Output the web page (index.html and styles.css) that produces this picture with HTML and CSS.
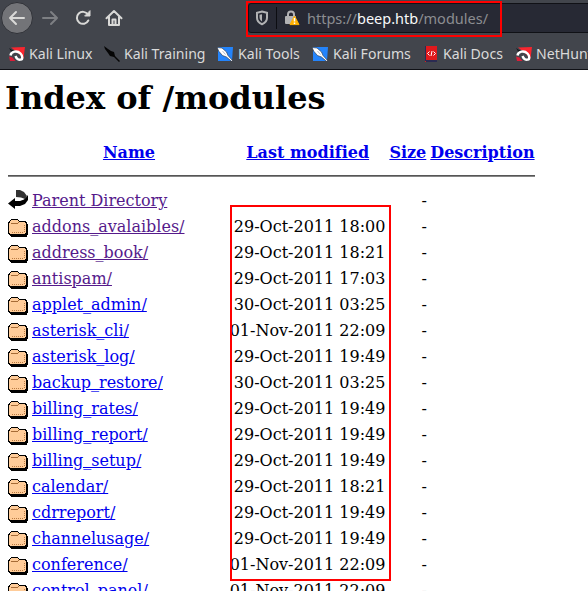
FILE: index.html
```html
<!DOCTYPE html>
<html lang="en">
<head>
<meta charset="utf-8">
<title>Index of /modules</title>
<link rel="stylesheet" href="styles.css">
</head>
<body>
<svg class="defs" width="0" height="0" aria-hidden="true">
  <symbol id="folder" viewBox="0 0 20 18">
    <path d="M3 0h7v1h1v1h7v1h1v2h1v11h-1v2H3v-1H2v-1H1v-1H0V3h1V2h1V1h1z" fill="#000"/>
    <path d="M3 1h7v1h1v1h6v1h1v10h-1v1H2v-1H1V4h1V2h1z" fill="#ffcc99"/>
    <path d="M3 4.500h7M10 3.500h1" stroke="#a66b36"/>
    <path d="M4 13.500h12M16.500 6v8" stroke="#b87a42" stroke-dasharray="1 1"/>
  </symbol>
  <symbol id="dragon" viewBox="0 0 16 16">
    <path d="M2 1.500l14-.5-1.500 11.500L9 7z" fill="#f8262f"/>
    <path d="M0 2l3 2 5 1-5 2z" fill="#15171c"/>
    <path d="M1.500 9.500C2 5.500 8 4 11.500 7.500c2.500 2.500 2 6 .5 6-2 .8-4.500-.5-5.500-3.500" fill="none" stroke="#fff" stroke-width="2.400"/>
    <path d="M0 10.500l3.500 1 3 3.500H1z" fill="#d91f38"/>
  </symbol>
  <symbol id="tool" viewBox="0 0 16 16">
    <path d="M1 1h15l-1 14H1z" fill="#2484fb"/>
    <path d="M0 1.500l5 .5 4.500 4 1.500 3.500 4.500 5-1 .8-5-4.300-4-1.500L2 5.500z" fill="#fff" stroke="#27303f" stroke-width=".6"/>
    <path d="M5.500 5l3 3.500" stroke="#b6bbc6"/>
  </symbol>
</svg>
<header class="chrome">
  <div class="toolbar">
    <span class="back"><svg width="18" height="18" viewBox="0 0 18 18"><path d="M16 9H2M8 3L2 9l6 6"/></svg></span>
    <svg class="nav forward" width="18" height="18" viewBox="0 0 18 18"><path d="M1 9h14M9 3l6 6-6 6"/></svg>
    <svg class="nav reload" width="18" height="18" viewBox="0 0 18 18"><path d="M14.300 11.500a6 6 0 1 1-.4-6"/><path d="M16 2v5h-5z" class="solid"/></svg>
    <svg class="nav home" width="18" height="18" viewBox="0 0 18 18"><path d="M1.500 9.200L9 2l7.500 7.200M4 8v8h10V8M7.500 16v-5.500h3V16"/></svg>
    <div class="address">
      <svg class="shield" width="14" height="16" viewBox="0 0 14 16"><path d="M7 1.500l5 1.200v5c0 3-2 5.300-5 6.500-3-1.200-5-3.500-5-6.500v-5z"/><path d="M7 4.200v7.200C5.200 10.200 4.500 9 4.500 7V4.800z" class="core"/></svg>
      <span class="divider"></span>
      <svg class="lock" width="15" height="16" viewBox="0 0 15 16"><path d="M3 7V4.500a3 3 0 0 1 6 0V7" fill="none" stroke="#b2b2b4" stroke-width="2"/><rect y="6" width="11" height="8" rx="1" fill="#b2b2b4"/><path d="M9.500 6L5 14.600h9z" fill="#ffb000" stroke="#ffb000" stroke-linejoin="round"/><path d="M9.500 8v3.500M9.500 12.500V14" stroke="#fff" stroke-width="1.500"/></svg>
      <span class="url">https://<b>beep.htb</b>/modules/</span>
      <span class="mark mark-url"></span>
    </div>
  </div>
  <nav class="bookmarks">
    <span class="bm b1"><svg width="16" height="16"><use href="#dragon"/></svg>Kali Linux</span>
    <span class="bm b2"><svg width="17" height="17" viewBox="0 0 17 17"><path d="M0 0l4 3 3 2 3 1 1 4 5 5-1 1-5-5-4-1-2-3-3-4z" fill="#050505"/></svg>Kali Training</span>
    <span class="bm b3"><svg width="16" height="16"><use href="#tool"/></svg>Kali Tools</span>
    <span class="bm b4"><svg width="16" height="16"><use href="#tool"/></svg>Kali Forums</span>
    <span class="bm b5"><svg width="13" height="16" viewBox="0 0 13 16"><path d="M0 0h12v16H0z" fill="#e0191c"/><path d="M0 0h1v15H0zM1 14h11v2H1z" fill="#2b2b52"/><path d="M4.500 5.500L2.500 7.500l2 2M8.500 5.500l2 2-2 2M7 5l-1 5" fill="none" stroke="#fff"/></svg>Kali Docs</span>
    <span class="bm b6"><svg width="16" height="16"><use href="#dragon"/></svg>NetHunter</span>
  </nav>
</header>
<main class="page">
  <h1>Index of /modules</h1>
  <div class="row head"><a class="name" href="#">Name</a><a class="date" href="#">Last modified</a><a class="size" href="#">Size</a><a class="desc" href="#">Description</a></div>
  <hr>
  <div class="listing">
    <div class="row"><svg class="parent" width="20" height="22" viewBox="0 0 20 22"><path d="M8 1h4l4 2 3 4-2 3-4-1.500-5-.5z" fill="#333"/><path d="M20 6v5l-3 4-5 2H7v3l-7-5.500L7 9v3h5l4-1.500 2-2z" fill="#000"/><path d="M8 9.500l5 .3 2 .2-3 1.200H8z" fill="#fff"/></svg><a class="name seen" href="#">Parent Directory</a><span class="date"></span><span class="size">-</span></div>
    <div class="row"><svg class="folder"><use href="#folder"/></svg><a class="name seen" href="#">addons_avalaibles/</a><span class="date">29-Oct-2011 18:00</span><span class="size">-</span></div>
    <div class="row"><svg class="folder"><use href="#folder"/></svg><a class="name seen" href="#">address_book/</a><span class="date">29-Oct-2011 18:21</span><span class="size">-</span></div>
    <div class="row"><svg class="folder"><use href="#folder"/></svg><a class="name seen" href="#">antispam/</a><span class="date">29-Oct-2011 17:03</span><span class="size">-</span></div>
    <div class="row"><svg class="folder"><use href="#folder"/></svg><a class="name" href="#">applet_admin/</a><span class="date">30-Oct-2011 03:25</span><span class="size">-</span></div>
    <div class="row"><svg class="folder"><use href="#folder"/></svg><a class="name" href="#">asterisk_cli/</a><span class="date">01-Nov-2011 22:09</span><span class="size">-</span></div>
    <div class="row"><svg class="folder"><use href="#folder"/></svg><a class="name" href="#">asterisk_log/</a><span class="date">29-Oct-2011 19:49</span><span class="size">-</span></div>
    <div class="row"><svg class="folder"><use href="#folder"/></svg><a class="name" href="#">backup_restore/</a><span class="date">30-Oct-2011 03:25</span><span class="size">-</span></div>
    <div class="row"><svg class="folder"><use href="#folder"/></svg><a class="name" href="#">billing_rates/</a><span class="date">29-Oct-2011 19:49</span><span class="size">-</span></div>
    <div class="row"><svg class="folder"><use href="#folder"/></svg><a class="name" href="#">billing_report/</a><span class="date">29-Oct-2011 19:49</span><span class="size">-</span></div>
    <div class="row"><svg class="folder"><use href="#folder"/></svg><a class="name" href="#">billing_setup/</a><span class="date">29-Oct-2011 19:49</span><span class="size">-</span></div>
    <div class="row"><svg class="folder"><use href="#folder"/></svg><a class="name" href="#">calendar/</a><span class="date">29-Oct-2011 18:21</span><span class="size">-</span></div>
    <div class="row"><svg class="folder"><use href="#folder"/></svg><a class="name" href="#">cdrreport/</a><span class="date">29-Oct-2011 19:49</span><span class="size">-</span></div>
    <div class="row"><svg class="folder"><use href="#folder"/></svg><a class="name" href="#">channelusage/</a><span class="date">29-Oct-2011 19:49</span><span class="size">-</span></div>
    <div class="row"><svg class="folder"><use href="#folder"/></svg><a class="name" href="#">conference/</a><span class="date">01-Nov-2011 22:09</span><span class="size">-</span></div>
    <div class="row"><svg class="folder"><use href="#folder"/></svg><a class="name" href="#">control_panel/</a><span class="date">01-Nov-2011 22:09</span><span class="size">-</span></div>
    <span class="mark mark-dates"></span>
  </div>
</main>
</body>
</html>
```
FILE: styles.css
```css
* { box-sizing: border-box; }
html, body { height: 100%; }
body {
  margin: 0;
  height: 591px;
  overflow: hidden;
  background: #fff;
  color: #000;
  font: 16px/28px "DejaVu Serif", serif;
  font-variant-ligatures: none;
}
.defs { position: absolute; }
svg { display: block; flex: none; }

.chrome {
  height: 70px;
  background: #42454c;
  border-bottom: 1px solid #101116;
  font-family: "Noto Sans", sans-serif;
  overflow: hidden;
}
.toolbar {
  display: flex;
  align-items: center;
  height: 36px;
  padding-left: 1px;
}
.back {
  display: flex;
  align-items: center;
  justify-content: center;
  width: 32px;
  height: 32px;
  border: 1px solid #303238;
  border-radius: 50%;
  background: #737478;
}
.back svg, .nav {
  fill: none;
  stroke: #d9d9d7;
  stroke-width: 2;
  stroke-linecap: round;
  stroke-linejoin: round;
}
.nav.forward { margin-left: 9px; stroke: #7d7f83; }
.reload { margin-left: 14px; }
.home { margin-left: 13px; }
.nav .solid { fill: #d9d9d7; stroke-width: 1; }
.address {
  position: relative;
  display: flex;
  align-items: center;
  flex: 1;
  height: 30px;
  margin-left: 125px;
  margin-right: -4px;
  padding-left: 6px;
  border: 1px solid #101116;
  border-radius: 3px;
  background: #272934;
}
.shield { fill: none; stroke: #b2b2b4; stroke-width: 2; }
.shield .core { fill: #b2b2b4; stroke: none; }
.divider { width: 1px; height: 22px; margin: 0 8px 0 7px; background: #0c0d12; }
.url { margin-left: 7px; color: #8c8d91; font-size: 14.5px; white-space: nowrap; }
.url b { color: #f9f9fa; font-weight: 400; }
.mark { position: absolute; border: 2px solid #f00; pointer-events: none; }
.mark-url { left: -3px; top: -3px; width: 256px; height: 36px; }

.bookmarks {
  display: flex;
  height: 33px;
  padding-left: 9px;
  color: #dadada;
  font-size: 14.1px;
}
.bm { display: flex; align-items: center; gap: 4px; flex: none; height: 36px; white-space: nowrap; }
.b1 { width: 95px; }
.b2 { width: 113px; gap: 3px; }
.b3 { width: 95px; gap: 5px; }
.b4 { width: 113px; gap: 5px; }
.b5 { width: 91px; gap: 5px; }

.page { padding: 9px 0 0 8px; }
h1 { margin: 0 0 0 -3px; height: 60px; font-size: 32px; line-height: 38px; }
.row {
  display: grid;
  grid-template-columns: 20px 194px 155.4px 37.4px 108px;
  height: 26px;
  column-gap: 4px;
  white-space: nowrap;
}
.row a { color: #0000ee; justify-self: start; }
.row .seen { color: #551a8b; }
.name { grid-column: 2; }
.date { grid-column: 3; justify-self: end; }
.size { grid-column: 4; justify-self: end; }
.desc { grid-column: 5; }
.row.head { font-weight: 700; }
.row.head .name { justify-self: center; }
.row.head .date { justify-self: center; }
.row.head .desc { margin-left: -0.5px; }
hr { width: 527px; height: 2px; margin: 10px 0; border: 0; border-top: 1px solid #555; background: #858585; }
.listing { position: relative; }
.folder { width: 20px; height: 18px; margin-top: 6px; shape-rendering: crispEdges; }
.parent { margin-top: 2px; }
.mark-dates { left: 222px; top: 18px; width: 161px; height: 376px; }
```
